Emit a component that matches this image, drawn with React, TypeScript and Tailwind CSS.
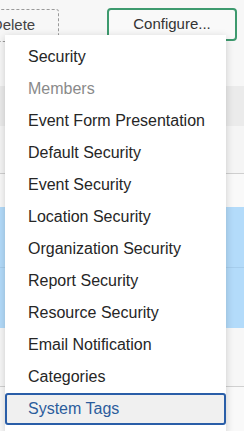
const menuItems = [
  'Security',
  'Members',
  'Event Form Presentation',
  'Default Security',
  'Event Security',
  'Location Security',
  'Organization Security',
  'Report Security',
  'Resource Security',
  'Email Notification',
  'Categories',
  'System Tags',
];

function App() {
  return (
    <div
      className="relative w-[244px] h-[431px] overflow-hidden bg-[#f8f8f8] text-[15px]"
      style={{ fontFamily: '"Liberation Sans", Arial, sans-serif' }}
    >
      {/* toolbar */}
      <div className="h-[86px] bg-[#f7f7f7] flex items-start pt-[8px]">
        <button className="ml-[-32px] mt-[1px] w-[91px] h-[33px] border border-dashed border-[#9a9a9a] rounded-[3px] text-[#444] bg-transparent">
          Delete
        </button>
        <button className="ml-[48px] w-[130px] h-[33px] border-2 border-[#3d9a6e] rounded-[4px] text-[#333] bg-[#f9f9f9]">
          Configure...
        </button>
      </div>

      {/* table rows behind the menu */}
      <div className="h-[40px] bg-[#ebebeb]" />
      <div className="h-[48px] bg-[#f5f5f5] border-b border-[#cfcfcf]" />
      <div className="h-[33px] bg-[#f9f9f9]" />
      <div className="h-[61px] bg-[#b3dbfa] border-b border-[#a6cdec]" />
      <div className="h-[60px] bg-[#b3dbfa]" />
      <div className="h-[59px] bg-[#f7f7f7] border-b border-[#d0d0d0]" />
      <div className="h-[44px] bg-[#f9f9f9]" />

      {/* dropdown menu */}
      <div className="absolute left-[5px] top-[35px] w-[221px] bg-white pt-[6px] pb-2 text-[16px] shadow-[0_2px_8px_rgba(0,0,0,0.18)]">
        {menuItems.map((item) => {
          const active = item === 'System Tags';
          const disabled = item === 'Members';
          return (
            <div
              key={item}
              className={
                active
                  ? 'h-[32px] flex items-center pl-[21px] border-2 border-[#2a5ea8] rounded-[3px] bg-[#f0f0f0] text-[#2b5c9c]'
                  : disabled
                  ? 'h-[32px] flex items-center pl-[23px] text-[#8a8a8a]'
                  : 'h-[32px] flex items-center pl-[23px] text-[#262626]'
              }
            >
              {item}
            </div>
          );
        })}
      </div>
    </div>
  );
}

export default App;
